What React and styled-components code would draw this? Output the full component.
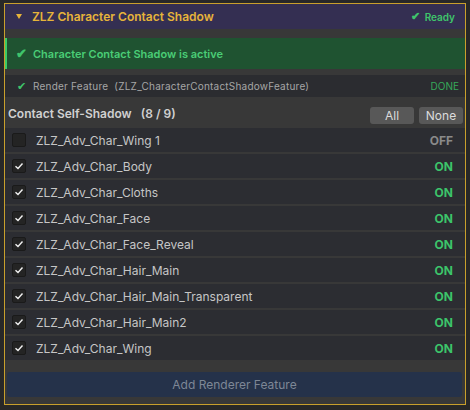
import React from "react";
import styled, { createGlobalStyle } from "styled-components";

const Global = createGlobalStyle`
  html, body { margin: 0; padding: 0; background: #282828; }
  body { font-family: Inter, "Noto Sans", "Liberation Sans", sans-serif; }
  * { box-sizing: border-box; }
`;

const Frame = styled.div`
  margin: 3px 4px 0 4px;
  width: 462px;
  height: 402px;
  border: 1px solid #c9a02c;
  background: #383838;
  display: flex;
  flex-direction: column;
`;

const Header = styled.div`
  height: 25px;
  background: #342f52;
  display: flex;
  align-items: center;
  padding: 0 10px 0 11px;
`;

const Caret = styled.span`
  width: 0;
  height: 0;
  border-left: 3px solid transparent;
  border-right: 3px solid transparent;
  border-top: 5px solid #e6b43a;
  margin-right: 10px;
`;

const Title = styled.span`
  flex: 1;
  color: #e6b43a;
  font-weight: 600;
  font-size: 12px;
`;

const Status = styled.span`
  display: flex;
  align-items: center;
  gap: 5px;
  color: ${(p) => p.$color || "#3fc46b"};
  font-weight: ${(p) => (p.$bold ? 600 : 400)};
  font-size: ${(p) => p.$size || 12}px;
`;

const Check = styled.span`
  color: ${(p) => p.$color || "#3fc46b"};
  font-size: ${(p) => p.$size || 12}px;
  line-height: 1;
`;

const Banner = styled.div`
  margin-top: 9px;
  height: 31px;
  background: #1f5331;
  border-left: 2px solid #3ccb66;
  display: flex;
  align-items: center;
  gap: 6px;
  padding-left: 9px;
  color: #4acd76;
  font-weight: 600;
  font-size: 11px;
`;

const FeatureRow = styled.div`
  margin-top: 6px;
  height: 22px;
  background: #2b2c30;
  display: flex;
  align-items: center;
  padding: 0 6px 0 12px;
  gap: 7px;
`;

const FeatureText = styled.span`
  flex: 1;
  color: #a6a6a6;
  font-size: 10px;
  letter-spacing: 0.22px;
`;

const SectionHead = styled.div`
  height: 31px;
  display: flex;
  align-items: center;
  padding: 2px 2px 0 3px;
`;

const SectionTitle = styled.span`
  flex: 1;
  color: #d0d0d0;
  font-weight: 600;
  font-size: 12px;
`;

const MiniButton = styled.button`
  width: 44px;
  height: 17px;
  margin-left: 5px;
  margin-top: 3px;
  border: none;
  border-radius: 3px;
  background: #585858;
  color: #dcdcdc;
  font-family: inherit;
  font-size: 12px;
  padding: 0;
  display: flex;
  align-items: center;
  justify-content: center;
`;

const List = styled.div`
  display: flex;
  flex-direction: column;
  gap: 2px;
`;

const Row = styled.div`
  height: 24px;
  background: #2c2d32;
  display: flex;
  align-items: center;
  padding: 0 12px 0 7px;
`;

const Box = styled.span`
  width: 14px;
  height: 14px;
  border-radius: 2px;
  background: #242424;
  border: 1px solid #1a1a1a;
  display: flex;
  align-items: center;
  justify-content: center;
  margin-right: 10px;
`;

const Name = styled.span`
  flex: 1;
  color: #c6c6c6;
  font-size: 12px;
`;

const State = styled.span`
  font-weight: 700;
  font-size: 12px;
  color: ${(p) => (p.$on ? "#3cc46a" : "#8a8a8a")};
`;

const AddButton = styled.button`
  margin: 12px 3px 0 2px;
  height: 25px;
  border: none;
  border-radius: 3px;
  background: #25324a;
  color: #7e8796;
  font-family: inherit;
  font-size: 12px;
  padding: 0;
`;

const Tick = () => (
  <svg width="10" height="8" viewBox="0 0 10 8">
    <path d="M1.5 4.2 L4 6.5 L8.5 1.5" stroke="#f2f2f2" strokeWidth="1.4" fill="none" />
  </svg>
);

const items = [
  ["ZLZ_Adv_Char_Wing 1", false],
  ["ZLZ_Adv_Char_Body", true],
  ["ZLZ_Adv_Char_Cloths", true],
  ["ZLZ_Adv_Char_Face", true],
  ["ZLZ_Adv_Char_Face_Reveal", true],
  ["ZLZ_Adv_Char_Hair_Main", true],
  ["ZLZ_Adv_Char_Hair_Main_Transparent", true],
  ["ZLZ_Adv_Char_Hair_Main2", true],
  ["ZLZ_Adv_Char_Wing", true],
];

export default function App() {
  return (
    <>
      <Global />
      <Frame>
        <Header>
          <Caret />
          <Title>ZLZ Character Contact Shadow</Title>
          <Status $bold $size={10}>
            <Check $size={11}>✔</Check>Ready
          </Status>
        </Header>
        <Banner>
          <Check $size={13}>✔</Check>
          Character Contact Shadow is active
        </Banner>
        <FeatureRow>
          <Check $size={11}>✔</Check>
          <FeatureText>Render Feature&nbsp;&nbsp;(ZLZ_CharacterContactShadowFeature)</FeatureText>
          <Status $size={10} $color="#36a85a">DONE</Status>
        </FeatureRow>
        <SectionHead>
          <SectionTitle>Contact Self-Shadow&nbsp;&nbsp; (8 / 9)</SectionTitle>
          <MiniButton>All</MiniButton>
          <MiniButton>None</MiniButton>
        </SectionHead>
        <List>
          {items.map(([name, on]) => (
            <Row key={name}>
              <Box>{on && <Tick />}</Box>
              <Name>{name}</Name>
              <State $on={on}>{on ? "ON" : "OFF"}</State>
            </Row>
          ))}
        </List>
        <AddButton>Add Renderer Feature</AddButton>
      </Frame>
    </>
  );
}
